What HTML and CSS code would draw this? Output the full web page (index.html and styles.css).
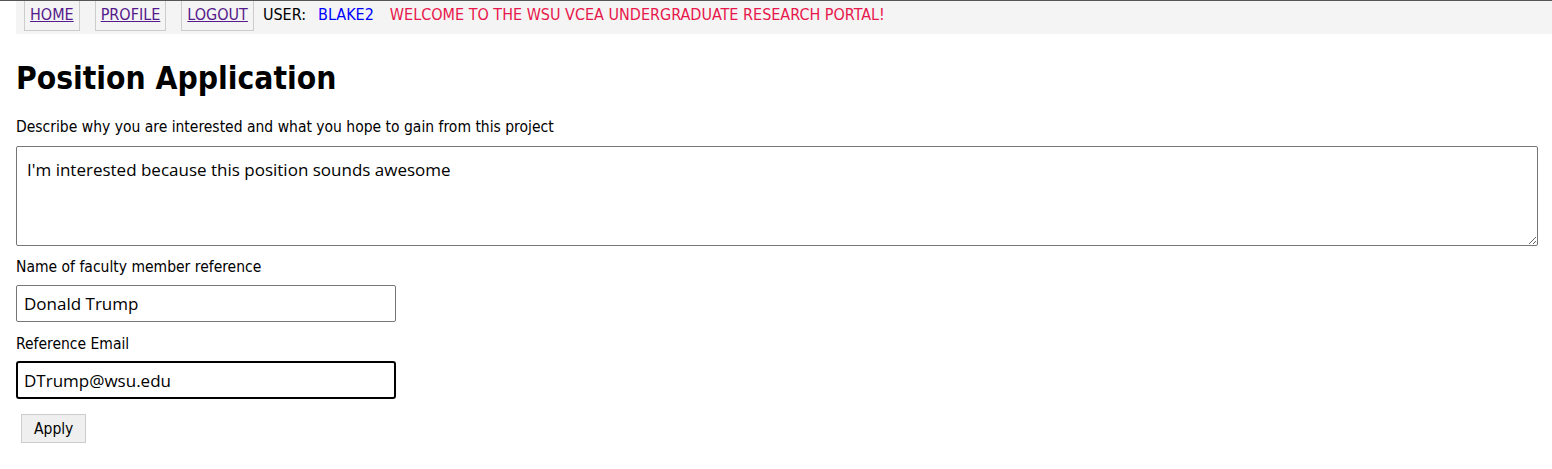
FILE: index.html
```html
<!DOCTYPE html>
<html>
<head>
<meta charset="utf-8">
<link rel="stylesheet" href="styles.css">
</head>
<body>
<div class="topline"></div>
<nav class="nav">
  <a class="nav-item" href="#">HOME</a>
  <a class="nav-item" href="#">PROFILE</a>
  <a class="nav-item" href="#">LOGOUT</a>
  <span class="user-label">USER:</span>
  <span class="user-name">BLAKE2</span>
  <span class="welcome">WELCOME TO THE WSU VCEA UNDERGRADUATE RESEARCH PORTAL!</span>
</nav>
<main class="main">
  <h1 class="title">Position Application</h1>
  <label class="label">Describe why you are interested and what you hope to gain from this project</label>
  <textarea class="area">I'm interested because this position sounds awesome</textarea>
  <label class="label">Name of faculty member reference</label>
  <input class="field" type="text" value="Donald Trump">
  <label class="label">Reference Email</label>
  <input class="field focused" type="text" value="DTrump@wsu.edu">
  <button class="btn">Apply</button>
</main>
</body>
</html>
```
FILE: styles.css
```css
html, body { margin: 0; padding: 0; background: #fff; }
body { font-family: "DejaVu Sans Condensed", "DejaVu Sans", sans-serif; color: #000; }
.topline { height: 1px; background: #555; }
.nav {
  margin-left: 16px;
  height: 33px;
  background: #f4f4f4;
  display: flex;
  align-items: flex-start;
  font-size: 16px;
}
.nav-item {
  display: block;
  margin-left: 8px;
  margin-right: 7px;
  padding: 5px 5px 6px;
  border: 1px solid #ccc;
  border-top: none;
  color: #551a8b;
  text-decoration: underline;
  line-height: 18px;
}
.user-label { margin-left: 2px; padding-top: 5px; line-height: 18px; }
.user-name { margin-left: 12px; padding-top: 5px; line-height: 18px; color: #0000ff; }
.welcome { margin-left: 16px; padding-top: 5px; line-height: 18px; color: #e8174b; }
.main { padding: 0 14px 0 16px; display: flex; flex-direction: column; align-items: flex-start; }
.title { font-size: 31.5px; font-weight: bold; margin: 27px 0 22px; line-height: 34px; }
.label { font-size: 15.5px; line-height: 20px; }
.area {
  box-sizing: border-box;
  width: 100%;
  height: 100px;
  margin: 9px 0 11px;
  padding: 12px 10px;
  border: 1px solid #767676;
  border-radius: 2px;
  font-family: "Open Sans", sans-serif;
  font-size: 17px;
  line-height: 22px;
  resize: both;
}
.field {
  box-sizing: border-box;
  width: 380px;
  height: 37px;
  margin: 8px 0 12px;
  padding: 0 7px;
  border: 1px solid #767676;
  border-radius: 2px;
  font-family: "Open Sans", sans-serif;
  font-size: 17px;
}
.focused {
  height: 38px;
  border: 2px solid #000;
  border-radius: 3px;
  padding: 0 6px;
  margin-top: 7px;
  margin-bottom: 15px;
}
.btn {
  margin: 0 0 0 5px;
  height: 29px;
  padding: 0 12px;
  background: #efefef;
  border: 1px solid #ccc;
  font-family: "DejaVu Sans Condensed", "DejaVu Sans", sans-serif;
  font-size: 15.5px;
}
```
